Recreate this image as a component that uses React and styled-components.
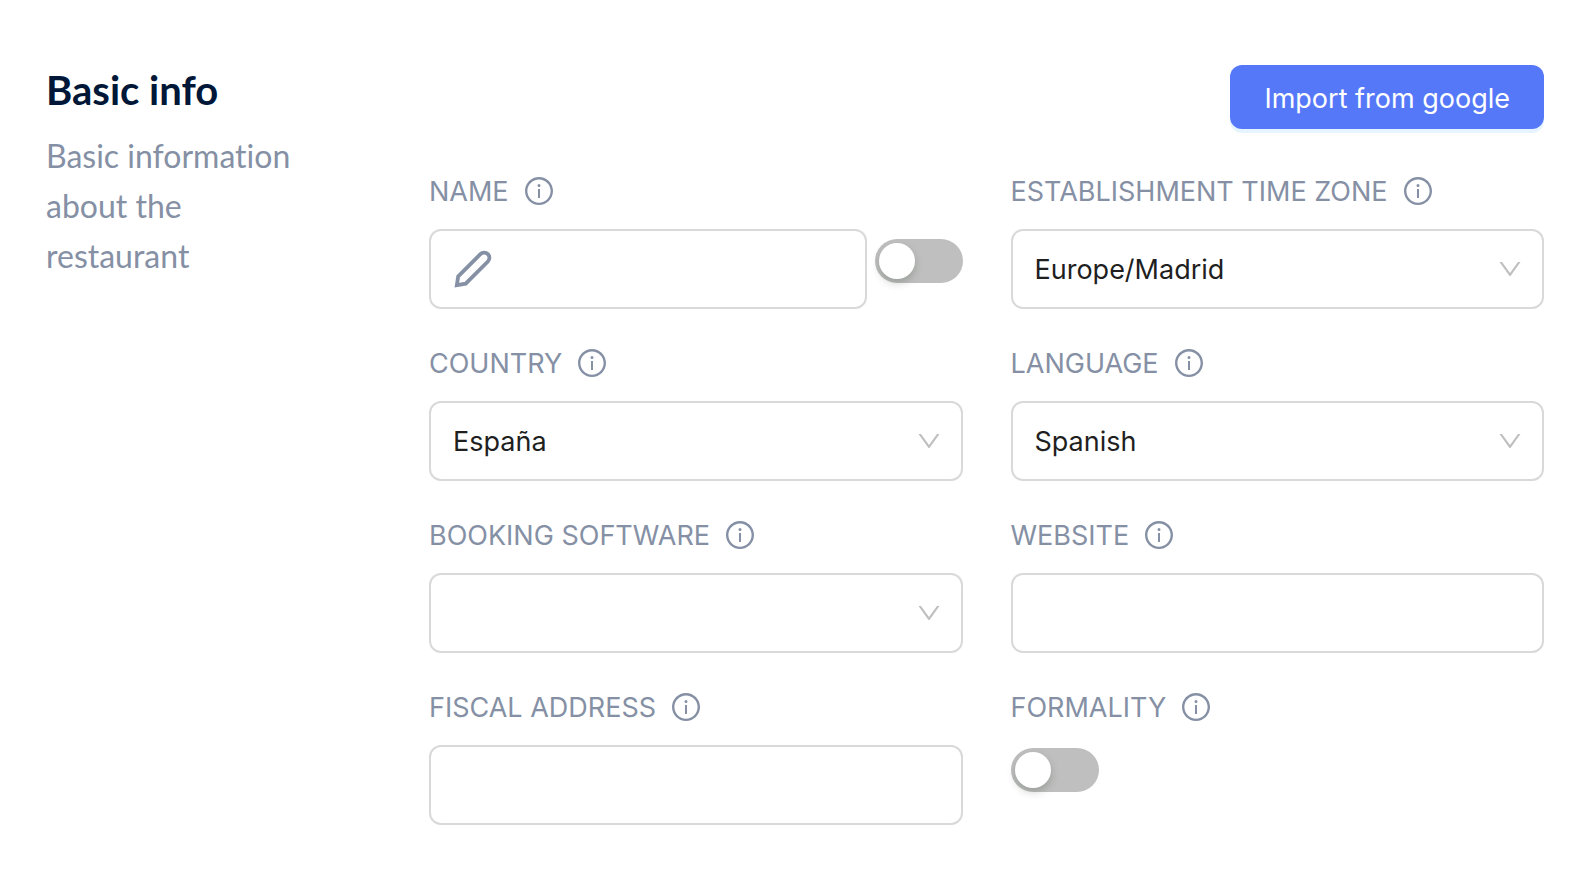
import React from 'react'
import styled, { createGlobalStyle } from 'styled-components'
import { AiOutlineDown, AiOutlineInfoCircle } from 'react-icons/ai'

const textMuted = '#8590a5'
const borderColor = '#d9d9d9'

const App = () => {
  return (
    <>
      <GlobalStyle />
      <Section>
        <Intro>
          <Title>Basic info</Title>
          <Description>Basic information about the restaurant</Description>
        </Intro>
        <Content>
          <ImportButton type="button">Import from google</ImportButton>
          <Form>
            <Field id="name" label="NAME">
              <NameRow>
                <InputBox>
                  <PencilIcon />
                  <BareInput id="name" type="text" />
                </InputBox>
                <Switch type="checkbox" aria-label="Enable name" $top={10} />
              </NameRow>
            </Field>
            <Field id="timezone" label="ESTABLISHMENT TIME ZONE">
              <Select id="timezone" options={['Europe/Madrid', 'Europe/London']} />
            </Field>
            <Field id="country" label="COUNTRY">
              <Select id="country" options={['España', 'Portugal']} />
            </Field>
            <Field id="language" label="LANGUAGE">
              <Select id="language" options={['Spanish', 'English']} />
            </Field>
            <Field id="software" label="BOOKING SOFTWARE">
              <Select id="software" options={['']} />
            </Field>
            <Field id="website" label="WEBSITE">
              <TextInput id="website" type="text" />
            </Field>
            <Field id="address" label="FISCAL ADDRESS">
              <TextInput id="address" type="text" />
            </Field>
            <Field id="formality" label="FORMALITY">
              <Switch id="formality" type="checkbox" $top={3} />
            </Field>
          </Form>
        </Content>
      </Section>
    </>
  )
}

export default App

const Field = ({ id, label, children }) => (
  <FieldBox>
    <LabelRow>
      <Label htmlFor={id}>{label}</Label>
      <AiOutlineInfoCircle />
    </LabelRow>
    {children}
  </FieldBox>
)

const Select = ({ id, options }) => (
  <SelectBox>
    <NativeSelect id={id}>
      {options.map((option) => (
        <option key={option}>{option}</option>
      ))}
    </NativeSelect>
    <AiOutlineDown />
  </SelectBox>
)

const PencilIcon = () => (
  <Pencil viewBox="0 0 40 40" aria-hidden="true">
    <path d="M3.800 36.200 L5.200 27.300 L27.400 5.100 A5.200 5.200 0 0 1 34.900 12.500 L12.700 34.700 Z" />
  </Pencil>
)

const GlobalStyle = createGlobalStyle`
  * {
    box-sizing: border-box;
  }

  body {
    margin: 0;
    background-color: #fff;
    font-family: Inter, "Liberation Sans", sans-serif;
    font-size: 27px;
    line-height: 44px;
  }
`

const Section = styled.section`
  display: grid;
  grid-template-columns: 335px minmax(0, 1fr);
  column-gap: 48px;
  padding: 65px 46px 55px;
`

const Intro = styled.div`
  padding-right: 80px;
  font-family: Lato, sans-serif;
  font-variant-ligatures: none;
`

const Title = styled.h2`
  margin: 0 0 16px;
  color: #001737;
  font-size: 40px;
  font-weight: 700;
  line-height: 50px;
`

const Description = styled.p`
  margin: 0;
  color: ${textMuted};
  font-size: 32px;
  line-height: 50px;
`

const Content = styled.div`
  display: flex;
  flex-direction: column;
`

const ImportButton = styled.button`
  align-self: flex-end;
  height: 64px;
  padding: 4px 34px 0;
  border: none;
  border-radius: 12px;
  background-color: #5578f9;
  box-shadow: 0 4px 0 rgba(5, 145, 255, 0.1);
  color: #fff;
  font: inherit;
  cursor: pointer;
`

const Form = styled.form`
  display: grid;
  grid-template-columns: repeat(2, minmax(0, 1fr));
  gap: 32px 48px;
  margin-top: 40px;
`

const FieldBox = styled.div`
  display: flex;
  flex-direction: column;
`

const LabelRow = styled.div`
  display: flex;
  align-items: center;
  gap: 14px;
  height: 44px;
  margin-bottom: 16px;
  color: ${textMuted};

  svg {
    width: 32px;
    height: 32px;
  }
`

const Label = styled.label`
  padding-top: 2px;
  white-space: nowrap;
`

const NameRow = styled.div`
  display: flex;
  align-items: flex-start;
  gap: 8px;
`

const TextInput = styled.input`
  width: 100%;
  height: 80px;
  padding: 2px 22px 0;
  border: 2px solid ${borderColor};
  border-radius: 12px;
  background-color: #fff;
  color: #1f1f1f;
  font: inherit;
`

const InputBox = styled.div`
  display: flex;
  flex: 1;
  align-items: center;
  gap: 8px;
  min-width: 0;
  height: 80px;
  padding: 0 22px;
  border: 2px solid ${borderColor};
  border-radius: 12px;
`

const BareInput = styled.input`
  flex: 1;
  min-width: 0;
  border: none;
  outline: none;
  background: transparent;
  font: inherit;
`

const Pencil = styled.svg`
  flex: none;
  width: 40px;
  height: 40px;
  fill: none;
  stroke: ${textMuted};
  stroke-width: 3.800;
`

const SelectBox = styled.div`
  display: grid;
  align-items: center;

  > * {
    grid-area: 1 / 1;
  }

  svg {
    justify-self: end;
    width: 28px;
    height: 28px;
    margin-right: 20px;
    color: #bfbfbf;
    pointer-events: none;
  }
`

const NativeSelect = styled.select`
  appearance: none;
  width: 100%;
  height: 80px;
  padding: 2px 60px 0 22px;
  border: 2px solid ${borderColor};
  border-radius: 12px;
  background-color: #fff;
  color: #1f1f1f;
  font: inherit;
`

const Switch = styled.input`
  appearance: none;
  flex: none;
  width: 88px;
  height: 44px;
  margin: ${({ $top }) => $top}px 0 0;
  padding: 4px;
  border-radius: 22px;
  background-color: #bfbfbf;
  cursor: pointer;

  &::before {
    content: '';
    display: block;
    width: 36px;
    height: 36px;
    border-radius: 50%;
    background-color: #fff;
    box-shadow: 0 4px 8px rgba(0, 35, 11, 0.2);
  }

  &:checked {
    background-color: #5578f9;
  }

  &:checked::before {
    margin-left: auto;
  }
`
